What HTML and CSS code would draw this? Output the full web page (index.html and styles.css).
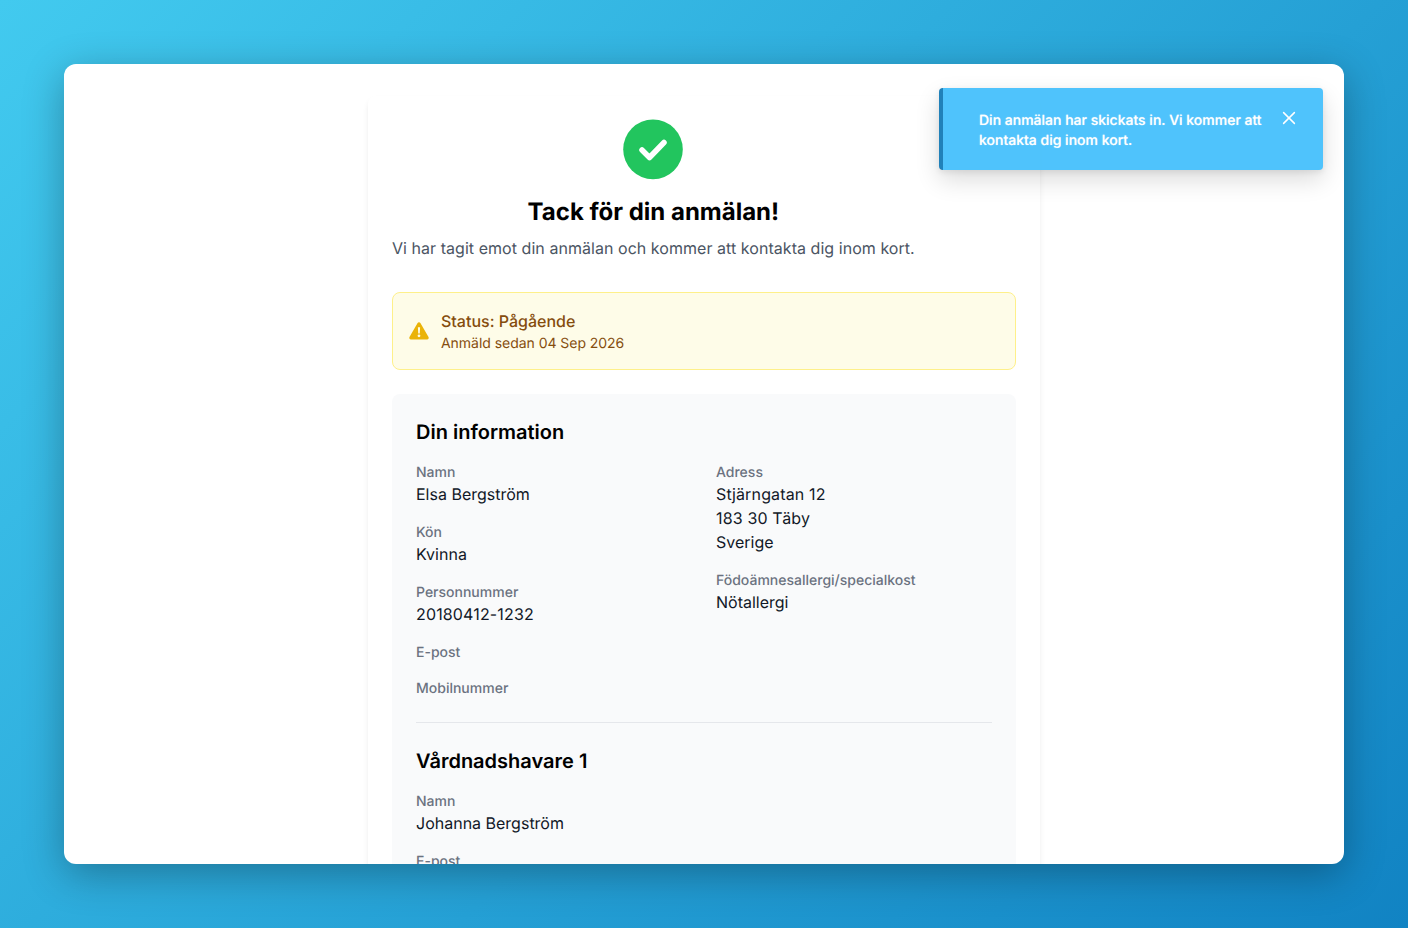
FILE: index.html
```html
<!DOCTYPE html>
<html lang="sv">
<head>
<meta charset="utf-8">
<title>Tack för din anmälan</title>
<link rel="stylesheet" href="styles.css">
</head>
<body>
<div class="window">
  <main class="card">
    <header class="thanks">
      <svg class="check" viewBox="0 0 60 60" width="60" height="60"><circle cx="30" cy="29.4" r="29.8" fill="#22c55e"/><path d="M19 30 26.5 37.5 41 22.5" fill="none" stroke="#fff" stroke-width="5.5" stroke-linecap="round" stroke-linejoin="round"/></svg>
      <h1>Tack för din anmälan!</h1>
      <p>Vi har tagit emot din anmälan och kommer att kontakta dig inom kort.</p>
    </header>
    <section class="alert">
      <svg class="alert-icon" viewBox="0 0 20 18" width="20" height="18"><path fill="#eab308" fill-rule="evenodd" d="M8.6 1a1.6 1.6 0 0 1 2.8 0l8.1 14.1a1.6 1.6 0 0 1-1.4 2.4H1.9a1.6 1.6 0 0 1-1.4-2.4ZM8.9 5.2l.3 6.2h1.6l.3-6.2ZM10 12.4a1.4 1.4 0 1 0 0 2.8 1.4 1.4 0 0 0 0-2.8Z"/></svg>
      <div>
        <div class="alert-title">Status: Pågående</div>
        <div class="alert-sub">Anmäld sedan 04 Sep 2026</div>
      </div>
    </section>
    <section class="panel">
      <h2>Din information</h2>
      <div class="cols">
        <div>
          <div class="field"><div class="label">Namn</div><div class="value">Elsa Bergström</div></div>
          <div class="field"><div class="label">Kön</div><div class="value">Kvinna</div></div>
          <div class="field"><div class="label">Personnummer</div><div class="value num">20180412-1232</div></div>
          <div class="field"><div class="label">E-post</div></div>
          <div class="field"><div class="label">Mobilnummer</div></div>
        </div>
        <div>
          <div class="field"><div class="label">Adress</div><div class="value num">Stjärngatan 12</div><div class="value num">183 30 Täby</div><div class="value">Sverige</div></div>
          <div class="field"><div class="label">Födoämnesallergi/specialkost</div><div class="value">Nötallergi</div></div>
        </div>
      </div>
      <hr class="divider">
      <h2>Vårdnadshavare 1</h2>
      <div class="field"><div class="label">Namn</div><div class="value">Johanna Bergström</div></div>
      <div class="field"><div class="label">E-post</div></div>
    </section>
  </main>
  <aside class="toast">
    <div class="toast-text">Din anmälan har skickats in. Vi kommer att kontakta dig inom kort.</div>
    <svg class="toast-close" viewBox="0 0 14 14" width="14" height="14" fill="none" stroke="#fff" stroke-width="1.5" stroke-linecap="round"><path d="M1.6 1.6 12.4 12.4M12.4 1.6 1.6 12.4"/></svg>
  </aside>
</div>
</body>
</html>
```
FILE: styles.css
```css
* { box-sizing: border-box; }
html, body { height: 100%; }
body {
  margin: 0;
  padding: 64px;
  overflow: hidden;
  background: linear-gradient(135deg, #42caef 0%, #1183c3 100%);
  font-family: Inter, "Liberation Sans", sans-serif;
  text-rendering: geometricPrecision;
  color: #111827;
}
.window {
  position: relative;
  height: 800px;
  background: #fff;
  border-radius: 12px;
  overflow: hidden;
  box-shadow: 0 10px 40px rgba(0, 0, 0, 0.3);
  display: flex;
  justify-content: center;
  align-items: flex-start;
}
.card {
  width: 672px;
  margin-top: 32px;
  padding: 24px;
  background: #fff;
  border-radius: 8px;
  box-shadow: 0 4px 6px -1px rgba(0, 0, 0, 0.1);
  flex: none;
}
.thanks {
  width: fit-content;
  text-align: center;
  margin-bottom: 32px;
}
.check {
  display: block;
  margin: 0 auto 16px;
  overflow: visible;
}
.thanks h1 {
  margin: 0 0 8px;
  font-size: 24px;
  line-height: 32px;
  font-weight: 700;
  color: #000;
}
.thanks p {
  margin: 0;
  font-size: 16px;
  line-height: 24px;
  letter-spacing: 0.045px;
  color: #4b5563;
}
.alert {
  display: flex;
  align-items: center;
  gap: 12px;
  padding: 16px;
  border: 1px solid #fef08a;
  border-radius: 8px;
  background: #fefce8;
  color: #854d0e;
  margin-bottom: 24px;
}
.alert-icon { flex: none; }
.alert-title { font-size: 16px; line-height: 24px; font-weight: 500; }
.alert-sub {
  font-size: 14px;
  line-height: 20px;
  letter-spacing: -0.04px;
  padding-top: 1px;
  margin-bottom: -1px;
}
.panel {
  padding: 24px;
  background: #f9fafb;
  border-radius: 8px;
}
.panel h2 {
  margin: 0 0 16px;
  font-size: 20px;
  line-height: 28px;
  font-weight: 600;
  color: #000;
}
.cols {
  display: grid;
  grid-template-columns: 1fr 1fr;
  gap: 24px;
}
.field + .field { margin-top: 16px; }
.label {
  font-size: 14px;
  line-height: 20px;
  font-weight: 500;
  color: #6b7280;
  padding-top: 1px;
  margin-bottom: -1px;
}
.value {
  font-size: 16px;
  line-height: 24px;
  color: #111827;
}
.num { letter-spacing: 0.15px; }
.divider {
  margin: 24px 0;
  border: 0;
  border-top: 1px solid #e5e7eb;
}
.toast {
  position: absolute;
  top: 24px;
  right: 21px;
  width: 384px;
  height: 82px;
  padding: 23px 27px 0 36px;
  display: flex;
  justify-content: space-between;
  align-items: flex-start;
  gap: 16px;
  background: #4cc2fc;
  border-left: 4px solid #1d7fb8;
  border-radius: 4px;
  opacity: 0.98;
  box-shadow: 0 10px 25px rgba(0, 0, 0, 0.14), 0 2px 6px rgba(0, 0, 0, 0.08);
  color: #fff;
}
.toast-text {
  font-size: 14px;
  line-height: 20px;
  font-weight: 500;
  text-shadow: 0 0 1px rgba(255, 255, 255, 0.7);
}
.toast-close { flex: none; }
```
